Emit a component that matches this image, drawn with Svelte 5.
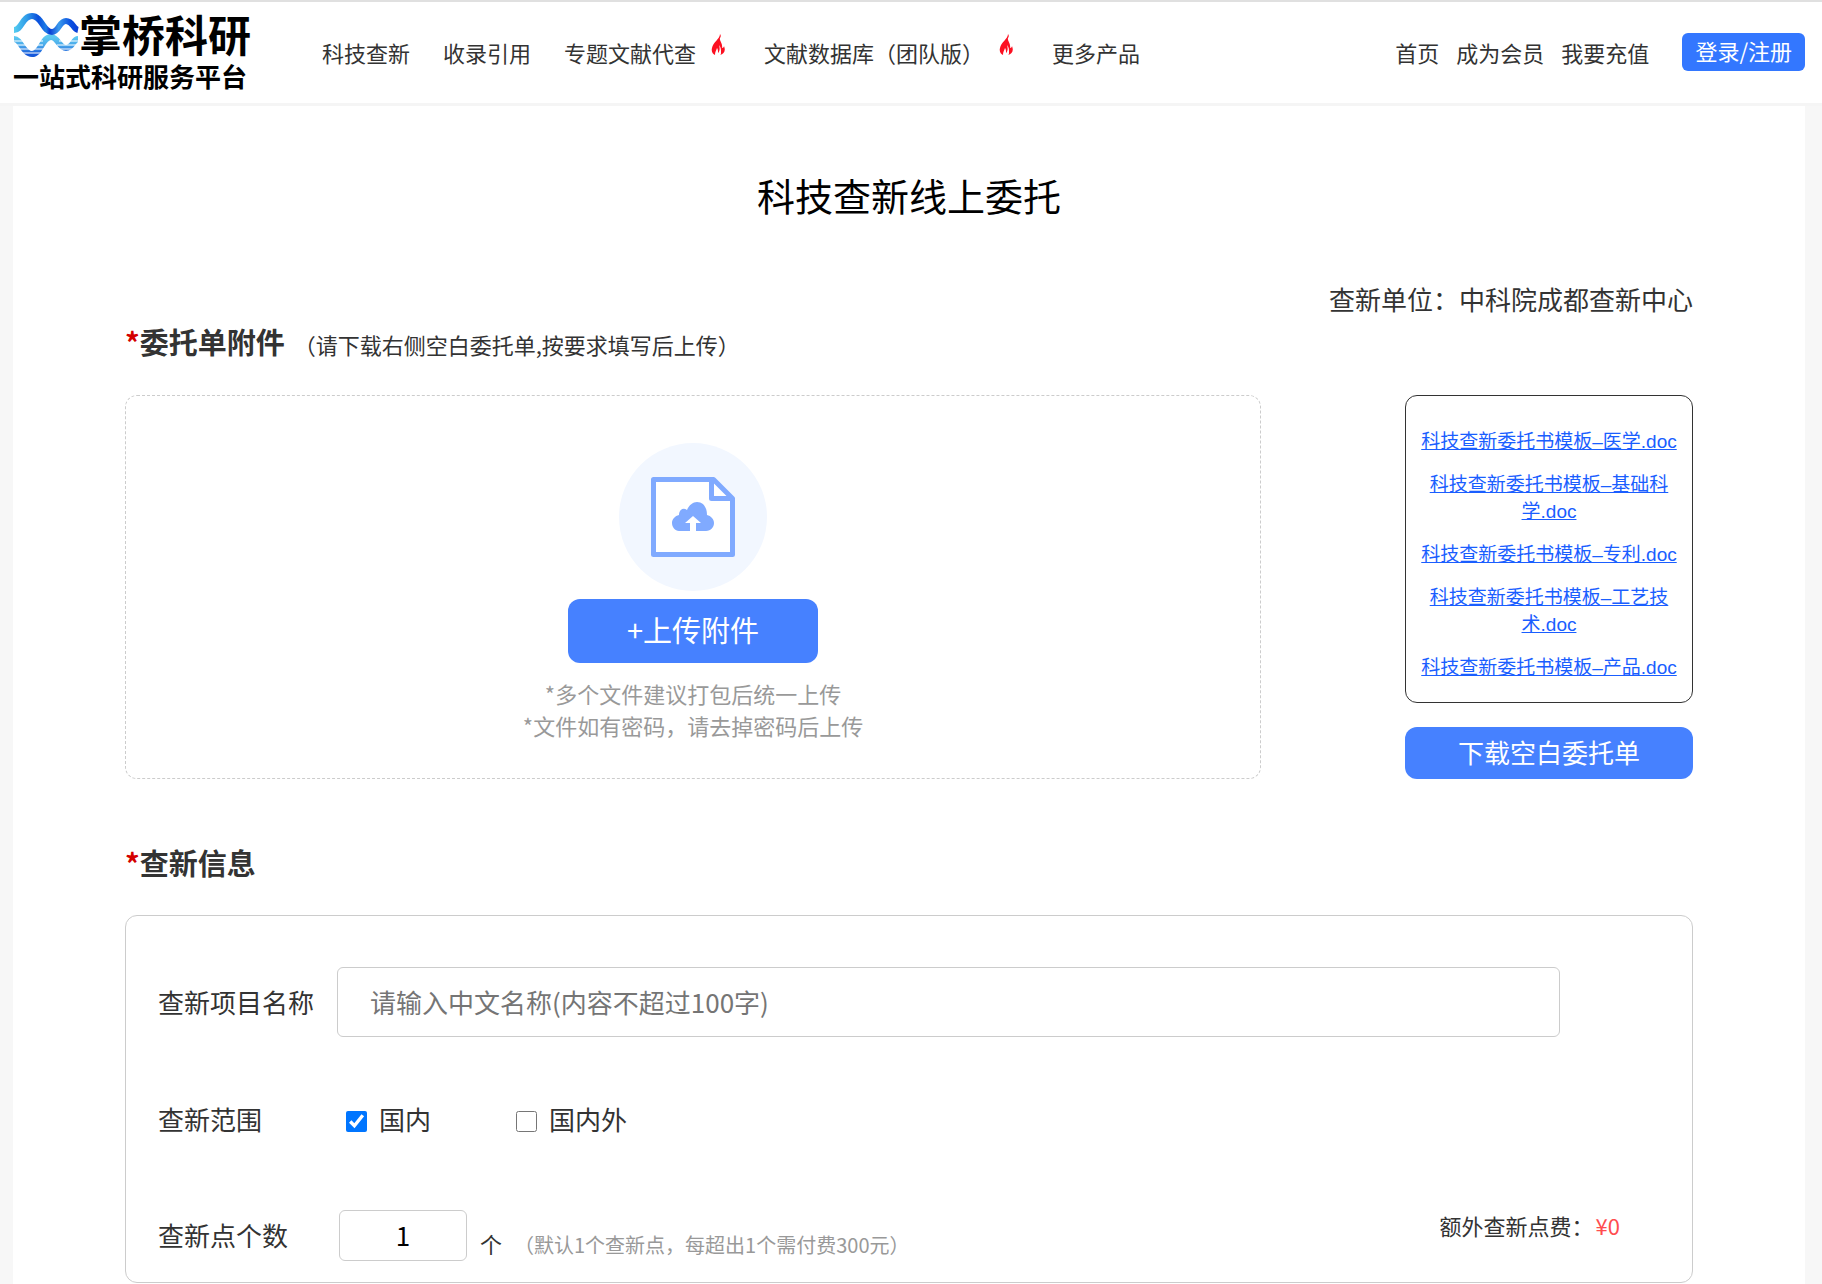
<script>
	const products = [
		{ name: '科技查新' },
		{ name: '收录引用' },
		{ name: '专题文献代查', hot: true },
		{ name: '文献数据库（团队版）', hot: true },
		{ name: '更多产品' }
	];
	const account = ['首页', '成为会员', '我要充值'];
	const templates = ['医学', '基础科学', '专利', '工艺技术', '产品'];
	const PRICE = 300;

	let projectName = '';
	let domestic = true;
	let overseas = false;
	let points = 1;

	// the first point is free
	$: extraFee = Math.max(0, (Number(points) || 1) - 1) * PRICE;
</script>

<div class="page">
	<header>
		<a class="logo" href="#home">
			<span class="brand">
				<svg class="wave" viewBox="0 0 66 46" aria-hidden="true">
					<defs>
						<linearGradient id="top" x1="0" x2="1" y1="0" y2="0">
							<stop offset="0" stop-color="#55cdf0" />
							<stop offset="0.2" stop-color="#2f9be8" />
							<stop offset="0.38" stop-color="#0a4fdc" />
							<stop offset="0.5" stop-color="#1f7ee6" />
							<stop offset="0.56" stop-color="#0a3fd6" />
							<stop offset="0.7" stop-color="#3a9aec" />
							<stop offset="0.88" stop-color="#0a4fe0" />
							<stop offset="1" stop-color="#0a3fd6" />
						</linearGradient>
						<linearGradient id="low" x1="0" x2="0" y1="0" y2="1">
							<stop offset="0" stop-color="#5cc8f0" />
							<stop offset="0.5" stop-color="#4aa8ea" />
							<stop offset="1" stop-color="#1558da" />
						</linearGradient>
					</defs>
					<path
						d="M1 27C8 27 10 42 19 42C28 42 29 25 38 25C45 25 46 36 53 36C60 36 60 27 65 27"
						fill="none"
						stroke="url(#low)"
						stroke-width="6"
					/>
					<path d="M0 29H30M46 29H66M0 33H30M44 33H66M0 37H66M0 41H66" stroke="#fff" stroke-width="1" />
					<path
						d="M1 18C9 18 9 4 19 4C29 4 30 20 39 20C46 20 46 9 53 9C60 9 60 17 65 18"
						fill="none"
						stroke="url(#top)"
						stroke-width="6"
					/>
				</svg>
				掌桥科研
			</span>
			<span class="slogan">一站式科研服务平台</span>
		</a>
		<nav class="products">
			{#each products as item}
				<a href="#product">
					{item.name}{#if item.hot}<svg class="fire" viewBox="0 0 14 22" aria-hidden="true">
							<path
								d="M9 0C9 5 2 8 1 14C0 18 2 20 4 21C4 18 5 17 6 14C7 15 7 17 7 19C9 17 9 14 8 11C10 13 10 16 10 18C10 20 10 20 9 21C13 20 15 17 13 12C13 13 12 14 11 14C12 9 8 7 9 4C10 3 10 1 9 0Z"
								fill="#fc1021"
							/>
						</svg>{/if}
				</a>
			{/each}
		</nav>
		<nav class="account">
			{#each account as name}
				<a href="#account">{name}</a>
			{/each}
		</nav>
		<button class="login" type="button">登录/注册</button>
	</header>

	<main>
		<h1>科技查新线上委托</h1>
		<p class="unit">查新单位：中科院成都查新中心</p>

		<h2><i>*</i>委托单附件<small>（请下载右侧空白委托单,按要求填写后上传）</small></h2>
		<div class="attach">
			<div class="upload">
				<svg class="file" viewBox="0 0 148 148" aria-hidden="true">
					<circle cx="74" cy="74" r="74" fill="#f2f7ff" />
					<path
						d="M34.500 36.500H94.500L113.500 55.500V111.500H34.500Z"
						fill="#fff"
						stroke="#80aaff"
						stroke-width="5"
						stroke-linejoin="round"
					/>
					<path
						d="M92.500 37V55.500H113"
						fill="none"
						stroke="#80aaff"
						stroke-width="5"
						stroke-linejoin="round"
					/>
					<path
						d="M60 88C56 88 53 84 53 80C53 76 56 73 60 72C60 67 64 64 68 67C70 62 74 59 78 59C84 59 88 64 88 72C92 73 95 76 95 80C95 84 92 88 87 88Z"
						fill="#80aaff"
					/>
					<path d="M74 73L82 80H77V89H71V80H66Z" fill="#fff" />
				</svg>
				<button class="pick" type="button">+上传附件</button>
				<p class="tips">*多个文件建议打包后统一上传<br />*文件如有密码，请去掉密码后上传</p>
			</div>
			<div class="download">
				<ul>
					{#each templates as name}
						<li><a href="#template">科技查新委托书模板–{name}.doc</a></li>
					{/each}
				</ul>
				<button class="blank" type="button">下载空白委托单</button>
			</div>
		</div>

		<h2 class="info"><i>*</i>查新信息</h2>
		<form on:submit|preventDefault>
			<div class="row">
				<label class="name" for="project">查新项目名称</label>
				<input
					id="project"
					class="project"
					type="text"
					placeholder="请输入中文名称(内容不超过100字)"
					maxlength="100"
					bind:value={projectName}
				/>
			</div>
			<div class="row range">
				<span class="name">查新范围</span>
				<label class="check"><input type="checkbox" bind:checked={domestic} />国内</label>
				<label class="check"><input type="checkbox" bind:checked={overseas} />国内外</label>
			</div>
			<div class="row">
				<label class="name" for="points">查新点个数</label>
				<input id="points" class="points" type="text" inputmode="numeric" bind:value={points} />
				<span class="piece">个</span>
				<span class="hint">（默认1个查新点，每超出1个需付费300元）</span>
				<span class="fee">额外查新点费：<b>¥{extraFee}</b></span>
			</div>
		</form>
	</main>
</div>

<style>
	:global(body) {
		background: #f7f7f7;
	}
	.page {
		font-family: 'Noto Sans CJK SC', 'Liberation Sans', sans-serif;
		font-size: 22px;
		line-height: 32px;
		color: #333;
	}
	.page * {
		box-sizing: border-box;
	}
	a {
		color: inherit;
		text-decoration: none;
	}
	button,
	input {
		font-family: inherit;
	}
	button {
		padding: 0 12px 4px;
		border: none;
		color: #fff;
		background: #4681ff;
		cursor: pointer;
	}
	header {
		display: flex;
		align-items: center;
		height: 106px;
		padding: 0 17px 2px 13px;
		border-top: 2px solid #e0e0e0;
		border-bottom: 3px solid #f5f5f5;
		background: #fff;
	}
	.logo {
		width: 309px;
		color: #000;
		font-family: 'Liberation Sans', 'Noto Sans CJK SC', sans-serif;
		font-weight: 700;
	}
	.brand {
		display: flex;
		align-items: center;
		padding-top: 2px;
		font-size: 43px;
		line-height: 50px;
	}
	.wave {
		width: 66px;
		height: 46px;
		margin-bottom: 4px;
	}
	.slogan {
		display: block;
		font-size: 26px;
		line-height: 32px;
	}
	.products {
		display: flex;
		gap: 33px;
	}
	.products a {
		display: flex;
		white-space: nowrap;
	}
	.fire {
		width: 14px;
		height: 22px;
		margin: -2px 6px 0 15px;
	}
	.account {
		display: flex;
		gap: 17px;
		margin-left: auto;
		white-space: nowrap;
	}
	.login {
		height: 38px;
		margin-left: 33px;
		padding: 0 13px 4px;
		border-radius: 6px;
		background: #3377ff;
		font-size: 22px;
		line-height: 34px;
		white-space: nowrap;
	}
	main {
		min-height: calc(100vh - 106px);
		margin: 0 17px 0 13px;
		padding: 61px 112px 0;
		background: #fff;
	}
	h1 {
		margin: 0;
		font-size: 38px;
		font-weight: 400;
		line-height: 56px;
		color: #000;
		text-align: center;
	}
	.unit {
		margin: 58px 0 0;
		font-size: 26px;
		line-height: 36px;
		text-align: right;
	}
	h2 {
		margin: 2px 0 29px;
		font-size: 29px;
		font-weight: 700;
		line-height: 44px;
	}
	h2 i {
		font-style: normal;
		color: #d40000;
	}
	h2 small {
		margin-left: 9px;
		font-size: 22px;
		font-weight: 400;
	}
	h2.info {
		margin: 61px 0 31px;
	}
	.attach {
		display: grid;
		grid-template-columns: 1fr 288px;
		gap: 144px;
	}
	.upload {
		display: flex;
		flex-direction: column;
		align-items: center;
		padding: 47px 0 37px;
		border: 1px dashed #ccc;
		border-radius: 12px;
	}
	.file {
		width: 148px;
		height: 148px;
	}
	.pick {
		width: 250px;
		height: 64px;
		margin-top: 8px;
		border-radius: 12px;
		font-size: 29px;
	}
	.tips {
		margin: 14px 0 0;
		color: #999;
		text-align: center;
	}
	.download {
		display: flex;
		flex-direction: column;
		gap: 24px;
	}
	.download ul {
		display: flex;
		flex-direction: column;
		gap: 16px;
		margin: 0;
		padding: 32px 12px 21px;
		border: 1px solid #333;
		border-radius: 12px;
		list-style: none;
		font-family: 'Liberation Sans', 'Noto Sans CJK SC', sans-serif;
		font-size: 19px;
		line-height: 27px;
		text-align: center;
	}
	.download a {
		color: #1a5eff;
		text-decoration: underline;
	}
	.blank {
		height: 52px;
		border-radius: 12px;
		font-size: 26px;
	}
	form {
		padding: 51px 32px 21px;
		border: 1px solid #ccc;
		border-radius: 12px;
	}
	.row {
		display: flex;
		align-items: center;
	}
	.name {
		width: 179px;
		font-size: 26px;
		white-space: nowrap;
	}
	.project {
		flex: 1;
		height: 70px;
		margin-right: 100px;
		padding: 0 32px 2px;
		border: 1px solid #ccc;
		border-radius: 6px;
		font-size: 26px;
	}
	.project::placeholder {
		color: #757575;
	}
	.range {
		margin: 66px 0 74px;
	}
	.check {
		display: flex;
		align-items: center;
		width: 170px;
		font-size: 26px;
	}
	.check input {
		width: 21px;
		height: 21px;
		margin: 4px 12px 0 9px;
		accent-color: #0075ff;
	}
	.points {
		width: 128px;
		height: 51px;
		margin-left: 2px;
		padding: 0 0 2px;
		border: 1px solid #ccc;
		border-radius: 6px;
		font-size: 26px;
		text-align: center;
	}
	.piece {
		margin: 16px 12px 0 13px;
	}
	.hint {
		margin-top: 20px;
		font-size: 20px;
		color: #999;
	}
	.fee {
		margin: 0 40px 20px auto;
	}
	.fee b {
		margin-left: 2px;
		font-weight: 400;
		color: #ff4d4f;
	}
</style>
